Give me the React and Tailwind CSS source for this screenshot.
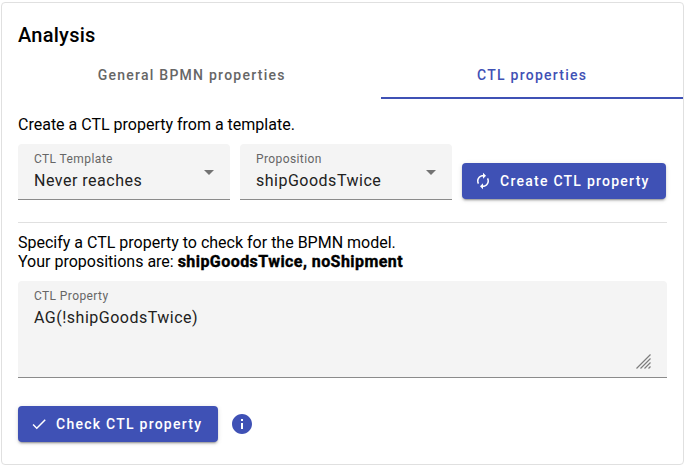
function SelectField({ label, value }) {
  return (
    <div className="flex h-14 w-[212px] items-center rounded-t border-b border-[#8b8b8b] bg-[#f4f4f4] px-4">
      <div className="flex-1 pb-px">
        <div className="pt-px text-[12px] leading-[16px] tracking-[0.4px] text-[#666666]">{label}</div>
        <div className="pt-[2px] text-[16px] leading-[24px] tracking-[0.5px] text-[#212121]">{value}</div>
      </div>
      <svg className="mt-[2px] h-[5px] w-[10px]" viewBox="0 0 10 5" fill="#737373">
        <path d="M0 0h10L5 5z" />
      </svg>
    </div>
  );
}

function RaisedButton({ icon, children, className }) {
  return (
    <button
      className={`flex h-9 items-center rounded bg-[#3f51b5] px-3 text-[14px] font-medium tracking-[1.25px] text-white shadow-[0_3px_1px_-2px_rgba(0,0,0,0.2),0_2px_2px_0_rgba(0,0,0,0.14),0_1px_5px_0_rgba(0,0,0,0.12)] ${className}`}
    >
      <svg className="mr-2 h-[18px] w-[18px] shrink-0" viewBox="0 0 24 24" fill="currentColor">
        <path d={icon} />
      </svg>
      <span className="whitespace-nowrap">{children}</span>
    </button>
  );
}

const AUTORENEW =
  'M12 6v3l4-4-4-4v3c-4.42 0-8 3.58-8 8 0 1.57.46 3.03 1.24 4.26L6.7 14.8c-.45-.83-.7-1.79-.7-2.8 0-3.31 2.69-6 6-6zm6.76 1.74L17.3 9.2c.44.84.7 1.79.7 2.8 0 3.31-2.69 6-6 6v-3l-4 4 4 4v-3c4.42 0 8-3.58 8-8 0-1.57-.46-3.03-1.24-4.26z';
const CHECK = 'M9 16.17L4.83 12l-1.42 1.41L9 19 21 7l-1.41-1.41z';
const INFO = 'M12 2C6.48 2 2 6.48 2 12s4.48 10 10 10 10-4.48 10-10S17.52 2 12 2zm1 15h-2v-6h2v6zm0-8h-2V7h2v2z';

export default function App() {
  return (
    <div className="h-[468px] w-[686px] bg-white pl-px pt-[2px] font-['Roboto',sans-serif] text-black">
      <div className="h-[463px] w-[683px] rounded border border-[#e0e0e0]">
        <h1 className="px-4 pt-4 text-[20px] font-medium leading-[32px] tracking-[0.25px]">Analysis</h1>
        <div className="flex h-12 text-[14px] font-medium tracking-[1.25px]">
          <div className="flex grow items-center justify-center px-6 text-[#666666]">General BPMN properties</div>
          <div className="flex grow items-center justify-center border-b-2 border-[#3f51b5] px-6 pt-[2px] text-[#3f51b5]">
            CTL properties
          </div>
        </div>
        <div className="px-4 pt-4 text-[16px] leading-[19px]">
          <p>Create a CTL property from a template.</p>
          <div className="mt-[10px] flex items-end">
            <SelectField label="CTL Template" value="Never reaches" />
            <div className="ml-[10px]">
              <SelectField label="Proposition" value="shipGoodsTwice" />
            </div>
            <RaisedButton icon={AUTORENEW} className="mb-px ml-[10px] w-[204px]">
              Create CTL property
            </RaisedButton>
          </div>
          <div className="mt-[22px] w-[649px] border-t border-[#e0e0e0]" />
          <p className="mt-[10px]">Specify a CTL property to check for the BPMN model.</p>
          <p>
            Your propositions are:{' '}
            <b className="font-bold tracking-[0.44px] [-webkit-text-stroke:0.4px_black]">shipGoodsTwice, noShipment</b>
          </p>
          <div className="mt-[10px] flex h-[97px] w-[649px] justify-between rounded-t border-b border-[#8b8b8b] bg-[#f4f4f4] px-4">
            <div>
              <div className="pt-[7px] text-[12px] leading-[16px] tracking-[0.4px] text-[#666666]">CTL Property</div>
              <div className="pt-[2px] text-[16px] leading-[24px] tracking-[0.5px] text-[#212121]">AG(!shipGoodsTwice)</div>
            </div>
            <svg
              className="mb-2 h-[15px] w-[15px] self-end"
              viewBox="0 0 15 15"
              fill="none"
              stroke="#7d7d7d"
              strokeWidth="1.2"
            >
              <path d="M0.5 14.5L14.5 0.5M4.5 14.5L14.5 4.5M8.5 14.5L14.5 8.5M12.5 14.5L14.5 12.5" />
            </svg>
          </div>
          <div className="mt-7 flex items-center">
            <RaisedButton icon={CHECK} className="w-[200px]">
              Check CTL property
            </RaisedButton>
            <svg className="ml-[12.4px] h-6 w-6" viewBox="0 0 24 24" fill="#3f51b5">
              <path d={INFO} />
            </svg>
          </div>
        </div>
      </div>
    </div>
  );
}
